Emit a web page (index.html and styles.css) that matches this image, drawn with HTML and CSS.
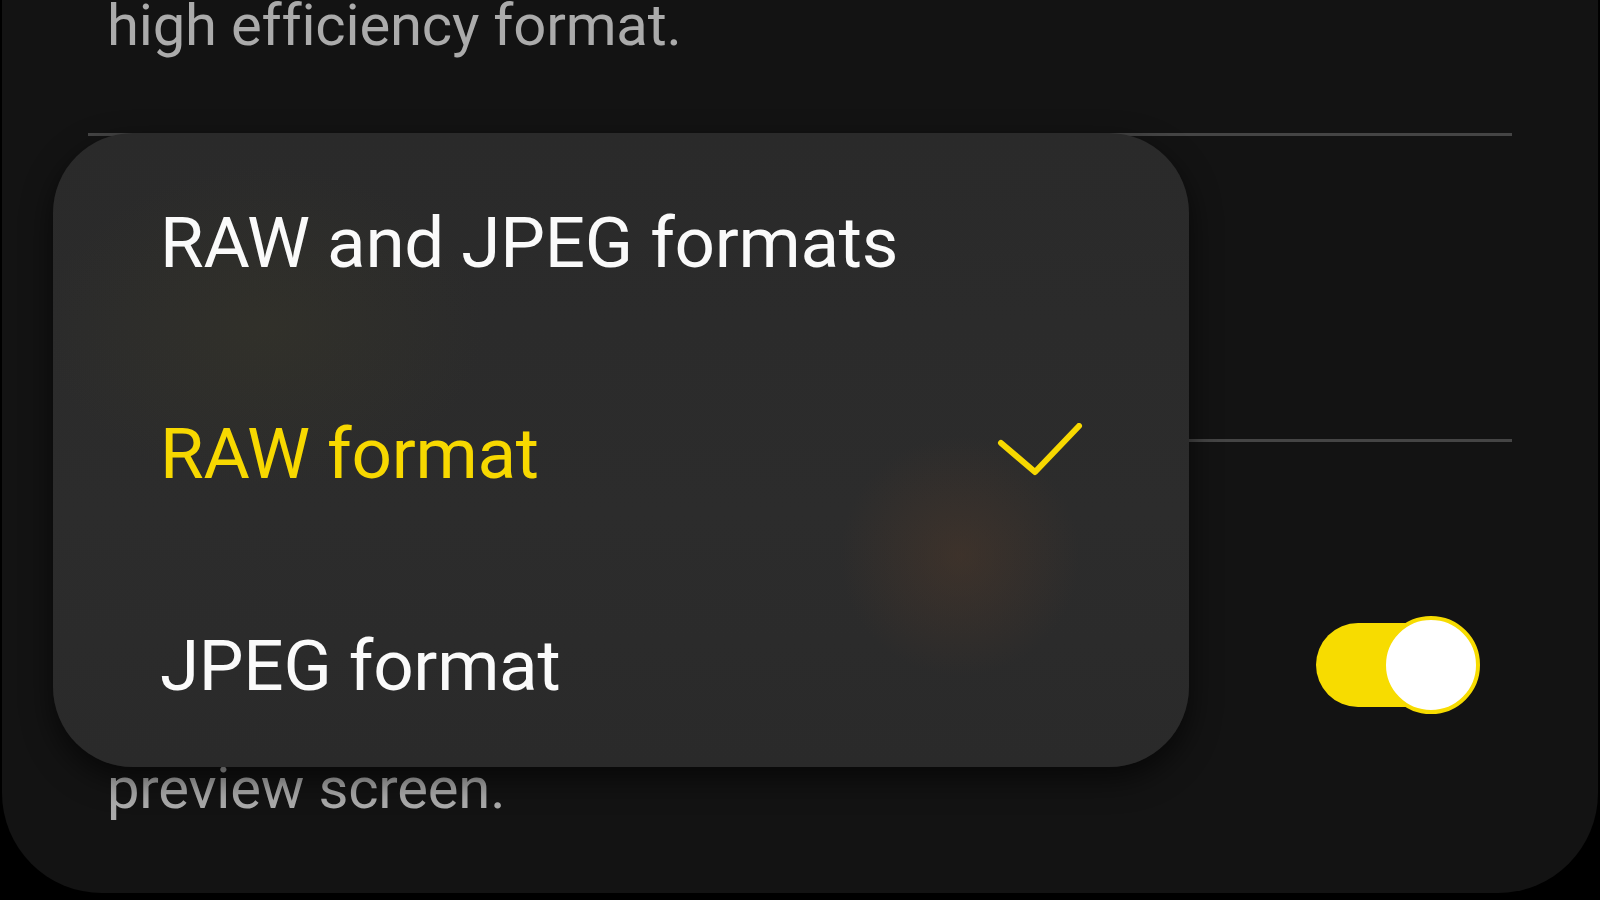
FILE: index.html
```html
<!DOCTYPE html>
<html lang="en">
<head>
  <meta charset="UTF-8">
  <meta name="viewport" content="width=device-width, initial-scale=1.0">
  <title>Camera settings</title>
  <link rel="stylesheet" href="styles.css">
</head>
<body>
  <div class="sheet">
    <div class="item-top">
      <p class="desc">high efficiency format.</p>
    </div>
    <div class="divider"></div>

    <div class="item-formats"></div>
    <div class="divider"></div>

    <div class="item-toggle">
      <p class="desc desc-last">preview screen.</p>
      <div class="switch on">
        <span class="switch-track"></span>
        <span class="switch-thumb"></span>
      </div>
    </div>

    <!-- format picker popup -->
    <div class="popup">
      <div class="popup-item">RAW and JPEG formats</div>
      <div class="popup-item selected">
        <span>RAW format</span>
        <svg class="check" width="90" height="56" viewBox="0 0 90 56">
          <polyline points="5,20 39,49 83,3" fill="none" stroke="currentColor" stroke-width="6" stroke-linecap="round" stroke-linejoin="round"/>
        </svg>
      </div>
      <div class="popup-item">JPEG format</div>
    </div>
  </div>
</body>
</html>
```

FILE: styles.css
```css
html, body {
  margin: 0;
  padding: 0;
  background: #000;
  height: 100%;
  overflow: hidden;
}

body {
  font-family: 'Roboto', 'Noto Sans', sans-serif;
}

.sheet {
  position: relative;
  margin: -120px 2px 0;
  padding: 112px 86px 72px;
  background: #131313;
  border-radius: 0 0 100px 100px;
}

.desc {
  margin: 0;
  font-size: 58px;
  line-height: 66px;
  color: #ababab;
  letter-spacing: -0.2px;
}

.item-top {
  padding: 0 19px;
  height: 141px;
}

.divider {
  height: 3px;
  background: #454545;
}

.item-formats {
  height: 303px;
}

.item-toggle {
  display: flex;
  justify-content: space-between;
  padding: 0 32px 0 19px;
}

.desc-last {
  margin-top: 313px;
}

.switch {
  position: relative;
  width: 164px;
  height: 98px;
  margin-top: 174px;
}

.switch-track {
  position: absolute;
  left: 0;
  top: 7px;
  width: 148px;
  height: 84px;
  border-radius: 42px;
  background: #f7dc00;
}

.switch-thumb {
  position: absolute;
  right: 0;
  top: 0;
  width: 90px;
  height: 90px;
  border-radius: 50%;
  background: #fff;
  border: 4px solid #f7dc00;
}

.popup {
  position: absolute;
  left: 51px;
  top: 253px;
  width: 1136px;
  height: 634px;
  border-radius: 80px;
  background:
    radial-gradient(circle at 907px 423px, rgba(82, 58, 42, 0.45) 0, rgba(82, 58, 42, 0) 120px),
    radial-gradient(ellipse 220px 160px at 212px 194px, rgba(60, 58, 40, 0.35) 0, rgba(60, 58, 40, 0) 100%),
    linear-gradient(180deg, #2a2a2a 0%, #2c2c2c 60%, #2a2a2a 100%);
  box-shadow: 0 12px 30px rgba(0, 0, 0, 0.6);
  display: flex;
  flex-direction: column;
}

.popup-item {
  flex: 1;
  display: flex;
  align-items: center;
  justify-content: space-between;
  padding: 8px 103px 0 107px;
  font-size: 71px;
  line-height: 1;
  color: #fafafa;
  letter-spacing: -0.3px;
}

.popup-item.selected {
  color: #f7d800;
}

.check {
  margin-top: -6px;
}
```
